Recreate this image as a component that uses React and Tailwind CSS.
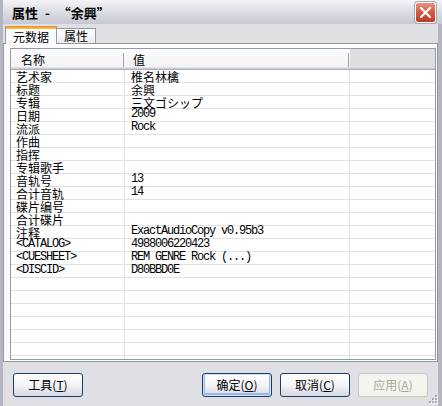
import React from "react";

const rows = [
  ["艺术家", "椎名林檎"],
  ["标题", "余興"],
  ["专辑", "三文ゴシップ"],
  ["日期", "2009", true],
  ["流派", "Rock", true],
  ["作曲", ""],
  ["指挥", ""],
  ["专辑歌手", ""],
  ["音轨号", "13", true],
  ["合计音轨", "14", true],
  ["碟片编号", ""],
  ["合计碟片", ""],
  ["注释", "ExactAudioCopy v0.95b3", true],
  ["<CATALOG>", "4988006220423", true],
  ["<CUESHEET>", "REM GENRE Rock (...)", true],
  ["<DISCID>", "D80BBD0E", true],
  ["", ""],
  ["", ""],
  ["", ""],
  ["", ""],
  ["", ""],
  ["", ""],
  ["", ""],
];

const mono = "font-['Liberation_Mono',monospace] tracking-[-1.2px] text-[12px] leading-[13px] relative -top-px";

const CloseButton = () => (
  <div className="w-[21px] h-[21px] rounded-[3px] border border-white bg-gradient-to-b from-[#e9907e] via-[#d25a44] to-[#b83c28] flex items-center justify-center shadow-[0_0_0_1px_#a8a8b8]">
    <svg width="13" height="13" viewBox="0 0 13 13">
      <path d="M2 2 L11 11 M11 2 L2 11" stroke="white" strokeWidth="2.2" strokeLinecap="round" />
    </svg>
  </div>
);

const Button = ({ label, hot, isDefault, disabled }) => (
  <div
    className={`w-[70px] h-[24px] rounded-[3px] border flex items-center justify-center text-[12px] leading-none ${
      disabled
        ? "border-[#c9c7ba] bg-[#f4f4f0] text-[#aca899]"
        : "border-[#1c3c6c] bg-gradient-to-b from-white via-[#f4f4f8] to-[#d8d8e2] text-black"
    } ${isDefault ? "shadow-[inset_0_0_0_1px_#cfe0f8,inset_0_-1px_0_2px_#9ab8e8]" : ""}`}
  >
    <span>
      {label}(<span className="underline">{hot}</span>)
    </span>
  </div>
);

const Cell = ({ text, ascii, className }) => (
  <div className={`h-full flex items-center whitespace-nowrap ${className}`}>
    <span className={ascii ? mono : "text-[12px] leading-[13px]"}>{text}</span>
  </div>
);

const App = () => {
  return (
    <div className="w-[442px] h-[406px] overflow-hidden bg-[#e0dfe3] flex flex-col font-['Noto_Sans_CJK_SC',sans-serif] text-black">
      {/* caption */}
      <div className="h-[24px] shrink-0 flex items-center justify-between pl-[9px] pr-[6px] bg-gradient-to-b from-[#f4f4f8] via-[#dcdce4] to-[#c8c8d4] border-l-[3px] border-[#b4b4c2]">
        <span className="font-bold text-[13px] leading-none">
          属性<span className="ml-[7px] mr-[8px]">-</span>“余興”
        </span>
        <CloseButton />
      </div>

      <div className="flex-1 flex flex-col border-l-[3px] border-r-[4px] border-[#b4b4c2] relative">
        {/* tabs */}
        <div className="h-[19px] shrink-0 flex items-end pl-[2px]">
          <div className="relative top-px z-10 h-[18px] w-[52px] bg-[#fcfcfe] border-x border-[#919b9c] flex flex-col">
            <div className="h-[3px] bg-gradient-to-b from-[#e68b2c] to-[#ffc73c]" />
            <div className="flex-1 flex items-center justify-center text-[12px] leading-none">元数据</div>
          </div>
          <div className="h-[15px] w-[39px] bg-gradient-to-b from-white to-[#ecebf0] border-t border-r border-[#919b9c] flex items-center justify-center text-[12px] leading-none">
            属性
          </div>
        </div>

        {/* tab page */}
        <div className="h-[319px] shrink-0 border border-[#919b9c] bg-[#fcfcfe] pl-[6px] pr-px pt-[4px] pb-px">
          <div className="h-full border border-[#8d9bab] bg-white flex flex-col overflow-hidden">
            <div className="h-[21px] shrink-0 flex text-[12px]">
              <div className="w-[114px] flex items-center justify-between pl-[10px] bg-gradient-to-b from-[#fcfcfe] to-[#f2f2f6] shadow-[inset_0_-1px_0_#b0b0bc,inset_0_-2px_0_#cdcdd6,inset_0_-3px_0_#e2e2e8]">
                <span className="leading-[13px]">名称</span>
                <div className="w-px h-[14px] bg-[#a0a0ac] mr-px" />
              </div>
              <div className="w-[225px] flex items-center justify-between pl-[8px] bg-gradient-to-b from-[#fcfcfe] to-[#f2f2f6] shadow-[inset_0_-1px_0_#b0b0bc,inset_0_-2px_0_#cdcdd6,inset_0_-3px_0_#e2e2e8]">
                <span className="leading-[13px]">值</span>
                <div className="w-px h-[14px] bg-[#a0a0ac] mr-px" />
              </div>
              <div className="flex-1 bg-[#dcdee0] shadow-[inset_0_-1px_0_#b0b0bc,inset_0_-2px_0_#c4c6ca]" />
            </div>
            {rows.map(([name, value, ascii], i) => (
              <div key={i} className="h-[13px] shrink-0 flex border-b border-[#e2e2e2]">
                <Cell text={name} ascii={name.startsWith("<")} className="w-[114px] pl-[5px] border-r border-[#e2e2e2]" />
                <Cell text={value} ascii={ascii} className="w-[225px] pl-[6px] border-r border-[#e2e2e2]" />
                <div className="flex-1" />
              </div>
            ))}
          </div>
        </div>

        {/* dialog buttons */}
        <div className="flex items-center pt-[11px] px-[10px]">
          <Button label="工具" hot="T" />
          <div className="flex-1" />
          <div className="flex gap-[8px]">
            <Button label="确定" hot="O" isDefault />
            <Button label="取消" hot="C" />
            <Button label="应用" hot="A" disabled />
          </div>
        </div>

        {/* size grip */}
        <svg className="absolute right-0 bottom-0" width="12" height="12" viewBox="0 0 12 12">
          {[[9, 1], [6, 4], [9, 4], [3, 7], [6, 7], [9, 7]].map(([x, y], i) => (
            <g key={i}>
              <rect x={x + 1} y={y + 1} width="2" height="2" fill="#ffffff" />
              <rect x={x} y={y} width="2" height="2" fill="#a8a8b4" />
            </g>
          ))}
        </svg>
      </div>
    </div>
  );
};

export default App;
